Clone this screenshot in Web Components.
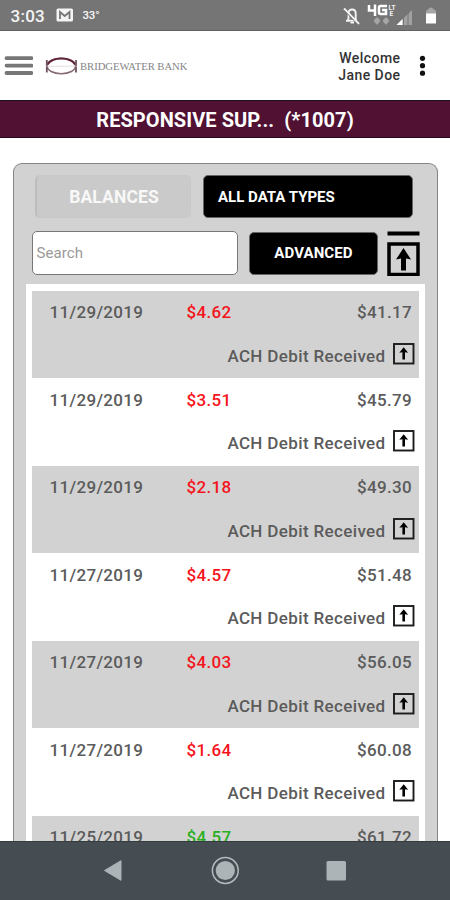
<!DOCTYPE html>
<html lang="en">
<head>
<meta charset="utf-8">
<title>Account activity</title>
<style>
html,body{margin:0;height:900px;overflow:hidden;background:#fff}
body{font-family:Roboto,"Liberation Sans",sans-serif;color:#5b5b5b}
</style>
</head>
<body>
<bank-app></bank-app>
<script>
const define=(name,html,setup)=>customElements.define(name,class extends HTMLElement{
  connectedCallback(){
    if(this.shadowRoot)return;
    const t=document.createElement('template');
    t.innerHTML='<style>*{box-sizing:border-box}svg{display:block;flex:none}</style>'+html;
    this.attachShadow({mode:'open'}).append(t.content.cloneNode(true));
    if(setup)setup(this,this.shadowRoot);
  }
});

define('status-bar',`<style>
:host{display:flex;height:30.5px;background:#757575;color:#f4f4f4;border-bottom:1px solid #626262;align-items:center;padding:1px 13px 0 10.500px;box-sizing:border-box;flex:none}
.time{font-size:17px;font-weight:500;width:45.500px;letter-spacing:.25px;white-space:nowrap;padding-top:1px}
.temp{font-size:11.500px;font-weight:500;letter-spacing:-.2px;margin-left:8.500px;flex:1}
</style>
<span class="time">3:03</span>
<svg width="18" height="14" viewBox="0 0 18 14"><rect x=".5" y=".5" width="16.5" height="13" rx="1.5" fill="#f4f4f4"/><path d="M4 11V4l4.7 4L13.500 4v7" fill="none" stroke="#757575" stroke-width="1.8"/></svg>
<span class="temp">33°</span>
<svg width="94" height="28" viewBox="343 1 94 28">
<g fill="none" stroke="#f4f4f4" stroke-width="1.900"><path d="M346 20.800h11M348 20l.5-1.500v-5c0-3 1.500-4 3.500-4s3.700 1 3.700 4v7"/><path d="M344 8.500l15 15.500"/></g>
<path d="M344 10.300l14 14.500" stroke="#757575" stroke-width="1"/>
<path d="M350.500 22h3.500v1.500h-3.500z" fill="#f4f4f4"/>
<path d="M369 5v5.500h7M375 4.500V16M387 6h-6.500q-1.500 0-1.500 1.500v5q0 1.500 1.500 1.500h5.500v-4h-4" fill="none" stroke="#fff" stroke-width="2.500"/>
<text x="388.500" y="10" fill="#f4f4f4" font-size="6.500" font-weight="700" textLength="7">LT</text><text x="389.500" y="16" fill="#f4f4f4" font-size="6.500" font-weight="700">E</text>
<path d="M374 20l3-3 3 3v1.500l-3 3.500-3-3.500zM383 20l3-3 3 3v1.500l-3 3.500-3-3.500z" fill="#a5a5a5"/>
<path d="M396.500 25L412 10v15z" fill="#a1a1a1"/><path d="M396.500 25l6-6v6z" fill="#fff"/><path d="M403.500 15v10M408 12v13" stroke="#757575"/>
<path d="M426 11l3-2.500q2-2 4 0l3 2.500v3h-10z" fill="#a5a5a5"/><path d="M426 13.500h10v10h-10z" fill="#fff"/>
</svg>`);

define('app-header',`<style>
:host{display:flex;height:69.500px;background:#fff;align-items:center;padding:1px 23px 0 4px;box-sizing:border-box;flex:none}
.brand{font:400 10.700px "Liberation Serif",serif;color:#858585;margin-left:2px;flex:1;white-space:nowrap;letter-spacing:-.06px;padding-top:1px}
.user{color:#333;font-size:14px;font-weight:500;line-height:17px;letter-spacing:.45px;text-align:right;margin-right:17.500px;white-space:nowrap;padding-top:2px}
</style>
<svg width="29" height="20" viewBox="0 0 29 20"><path d="M2.500 2.200h25M2.500 9.600h25M2.500 17h25" stroke="#777" stroke-width="3.800" stroke-linecap="round"/></svg>
<svg style="margin-left:12px" width="33" height="20" viewBox="0 0 33 20"><ellipse cx="16.300" cy="10" rx="14.300" ry="7.700" fill="none" stroke="#856a76" stroke-width="1.600"/><path d="M2.500 8.500C7 .4 25.600.4 30 8.500" fill="none" stroke="#602238" stroke-width="2"/><path d="M1.800 4v12.500M31 4v12.500" stroke="#70505e" stroke-width="1.800"/><path d="M1 10.200h31" stroke="#d9cbd1" stroke-width=".7"/></svg>
<span class="brand">BRIDGEWATER BANK</span>
<div class="user">Welcome<br>Jane Doe</div>
<svg width="9" height="22" viewBox="0 0 9 22" fill="#111"><circle cx="4.500" cy="3.300" r="2.600"/><circle cx="4.500" cy="10.700" r="2.600"/><circle cx="4.500" cy="18.200" r="2.600"/></svg>`);

define('account-banner',`<style>
:host{display:flex;height:38px;background:#501133;border-top:1.500px solid #1b1118;border-bottom:1.500px solid #28081a;color:#fff;align-items:center;justify-content:center;font-size:20px;font-weight:700;letter-spacing:.07px;padding-top:2px;white-space:pre;box-sizing:border-box;flex:none}
</style><slot></slot>`);

define('app-button',`<style>
:host{display:flex;align-items:center;justify-content:center;background:#000;color:#fff;border:1px solid #666;border-radius:5px;font-size:15px;font-weight:700;box-sizing:border-box;white-space:nowrap;height:43px}
:host([muted]){background:#cacaca;border-color:#c8c8c8;border-left:2px solid #bdbdbd;color:#f8f8f8;font-size:17.500px}
:host([select]){justify-content:flex-start;padding-left:14px}
</style><slot></slot>`);

define('up-icon',`<style>:host{display:block}</style>
<svg width="22" height="22" viewBox="0 0 22 22"><rect x="1" y="1" width="19.500" height="19.500" fill="none" stroke="#1c1c1c" stroke-width="1.900"/><path d="M10.700 4.300l4.400 5.400-3.100-.5v7.300H9.400V9.200l-3.100.5z" fill="#000"/></svg>`);

define('transaction-row',`<style>
:host{display:block;height:87.500px;font-size:17px;font-weight:500;letter-spacing:.32px;color:#5b5b5b;background:#fff;box-sizing:border-box;white-space:nowrap}
:host([shade]){background:#d2d2d2}
.top{display:grid;grid-template-columns:137px 1fr auto;padding:11.500px 7px 0 17.500px;line-height:20px}
.amount{color:#f5141c}.amount.credit{color:#27b021}
.bottom{display:flex;justify-content:flex-end;align-items:center;gap:7px;padding:20px 4.500px 0 0;height:43px;line-height:22px}
.desc{letter-spacing:.36px;padding-top:4px}
</style>
<div class="top"><span class="date"></span><span class="amount"></span><span class="balance"></span></div>
<div class="bottom"><span class="desc">ACH Debit Received</span><up-icon></up-icon></div>`,(h,r)=>{
  for(const k of ['date','amount','balance'])r.querySelector('.'+k).textContent=h.getAttribute(k);
  if(h.hasAttribute('credit'))r.querySelector('.amount').classList.add('credit');
});

define('activity-panel',`<style>
:host{display:block;margin:25px 12px 0 13px;background:#d2d2d2;border:1.300px solid #858585;border-bottom:0;border-radius:9px 9px 0 0;height:720px;flex:none;box-sizing:border-box;padding:11.200px 12px 0 12px}
.types{display:flex;gap:12px;padding-left:9px}
.search{display:flex;gap:11.500px;margin:12.500px 0 0 5.500px;align-items:center}
.field{width:206px;height:43.500px;border:1.500px solid #777;border-radius:5px;background:#fff;color:#999;font-size:15px;display:flex;align-items:center;padding-left:4px;letter-spacing:.1px}
.list{border:6px solid #fff;border-top-width:7px;margin-top:8.200px;background:#fff}
</style>
<div class="types"><app-button muted style="width:156px;letter-spacing:.1px;padding-left:1px">BALANCES</app-button><app-button select style="width:210px">ALL DATA TYPES</app-button></div>
<div class="search"><div class="field">Search</div><app-button style="width:129px;letter-spacing:.1px">ADVANCED</app-button>
<svg style="margin-left:-3px" width="33" height="45" viewBox="0 0 33 45"><path d="M.500 2.500h32" stroke="#000" stroke-width="4"/><rect x="2" y="13" width="29" height="30.500" fill="none" stroke="#000" stroke-width="3.500"/><path d="M16.500 17l7.500 11.500-5-1v12h-5v-12l-5 1z"/></svg></div>
<div class="list"></div>`,(h,r)=>{
  const data=[['11/29/2019','$4.62','$41.17'],['11/29/2019','$3.51','$45.79'],['11/29/2019','$2.18','$49.30'],['11/27/2019','$4.57','$51.48'],['11/27/2019','$4.03','$56.05'],['11/27/2019','$1.64','$60.08'],['11/25/2019','$4.57','$61.72']];
  data.forEach(([d,a,b],i)=>{
    const e=document.createElement('transaction-row');
    e.setAttribute('date',d);e.setAttribute('amount',a);e.setAttribute('balance',b);
    if(i%2===0)e.setAttribute('shade','');
    if(i===6)e.setAttribute('credit','');
    r.querySelector('.list').append(e);
  });
});

define('nav-bar',`<style>
:host{display:block;height:59px;background:#454d53;border-top:1.500px solid #343c40;box-sizing:border-box;flex:none;overflow:hidden}
</style>
<svg width="450" height="57" viewBox="0 842 450 57"><path d="M104.500 870.500l16.500-9.800v19.600z" fill="#adb4b8" stroke="#adb4b8" stroke-linejoin="round"/><circle cx="225.300" cy="870.500" r="12.900" fill="none" stroke="#b4babd" stroke-width="1.500"/><circle cx="225.300" cy="870.500" r="9.600" fill="#adb4b8"/><rect x="326.500" y="861" width="19.500" height="19.500" rx="1.500" fill="#adb4b8"/></svg>`);

define('bank-app',`<style>
:host{display:flex;flex-direction:column;width:450px;height:900px;overflow:hidden;background:#fff}
main{flex:1;min-height:0;overflow:hidden;display:flex;flex-direction:column}
</style>
<status-bar></status-bar><app-header></app-header>
<account-banner>RESPONSIVE SUP...&nbsp; (*1007)</account-banner>
<main><activity-panel></activity-panel></main><nav-bar></nav-bar>`);
</script>
</body>
</html>
